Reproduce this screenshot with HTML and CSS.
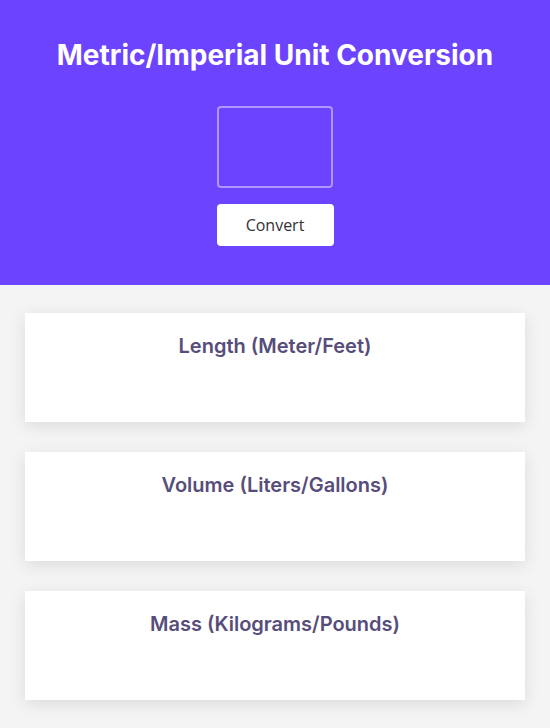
FILE: index.html
```html
<!DOCTYPE html>
<html lang="en">
<head>
<meta charset="utf-8">
<title>Metric/Imperial Unit Conversion</title>
<link rel="stylesheet" href="styles.css">
</head>
<body>
<header class="hero">
  <h1 class="hero-title">Metric/Imperial Unit Conversion</h1>
  <input class="hero-input" type="text" aria-label="Value">
  <button class="hero-btn" type="button">Convert</button>
</header>
<main class="cards">
  <section class="card"><h2 class="card-title">Length (Meter/Feet)</h2></section>
  <section class="card"><h2 class="card-title">Volume (Liters/Gallons)</h2></section>
  <section class="card"><h2 class="card-title">Mass (Kilograms/Pounds)</h2></section>
</main>
</body>
</html>
```

FILE: styles.css
```css
* { box-sizing: border-box; }
html, body { margin: 0; padding: 0; }
body {
  background: #f4f4f4;
  font-family: Inter, "Noto Sans", sans-serif;
}
.hero {
  background: #6c43ff;
  display: flex;
  flex-direction: column;
  align-items: center;
  padding: 38px 20px 39px;
}
.hero-title {
  margin: 0;
  color: #ffffff;
  font-size: 28px;
  font-weight: 700;
  line-height: 34px;
}
.hero-input {
  margin-top: 34px;
  width: 116px;
  height: 82px;
  background: transparent;
  border: 2px solid rgba(255, 255, 255, 0.45);
  border-radius: 4px;
  outline: none;
  color: #fff;
}
.hero-btn {
  margin-top: 16px;
  width: 117px;
  height: 42px;
  background: #ffffff;
  border: none;
  border-radius: 4px;
  font-family: "Open Sans", sans-serif;
  font-size: 16px;
  color: #333;
  cursor: pointer;
}
.cards {
  display: flex;
  flex-direction: column;
  gap: 30px;
  padding: 28px 25px 30px;
}
.card {
  background: #ffffff;
  height: 109px;
  box-shadow: 0 4px 16px rgba(0, 0, 0, 0.1);
  padding-top: 21px;
}
.card-title {
  margin: 0;
  text-align: center;
  font-size: 20px;
  font-weight: 600;
  line-height: 24px;
  color: #574d7b;
}
```
